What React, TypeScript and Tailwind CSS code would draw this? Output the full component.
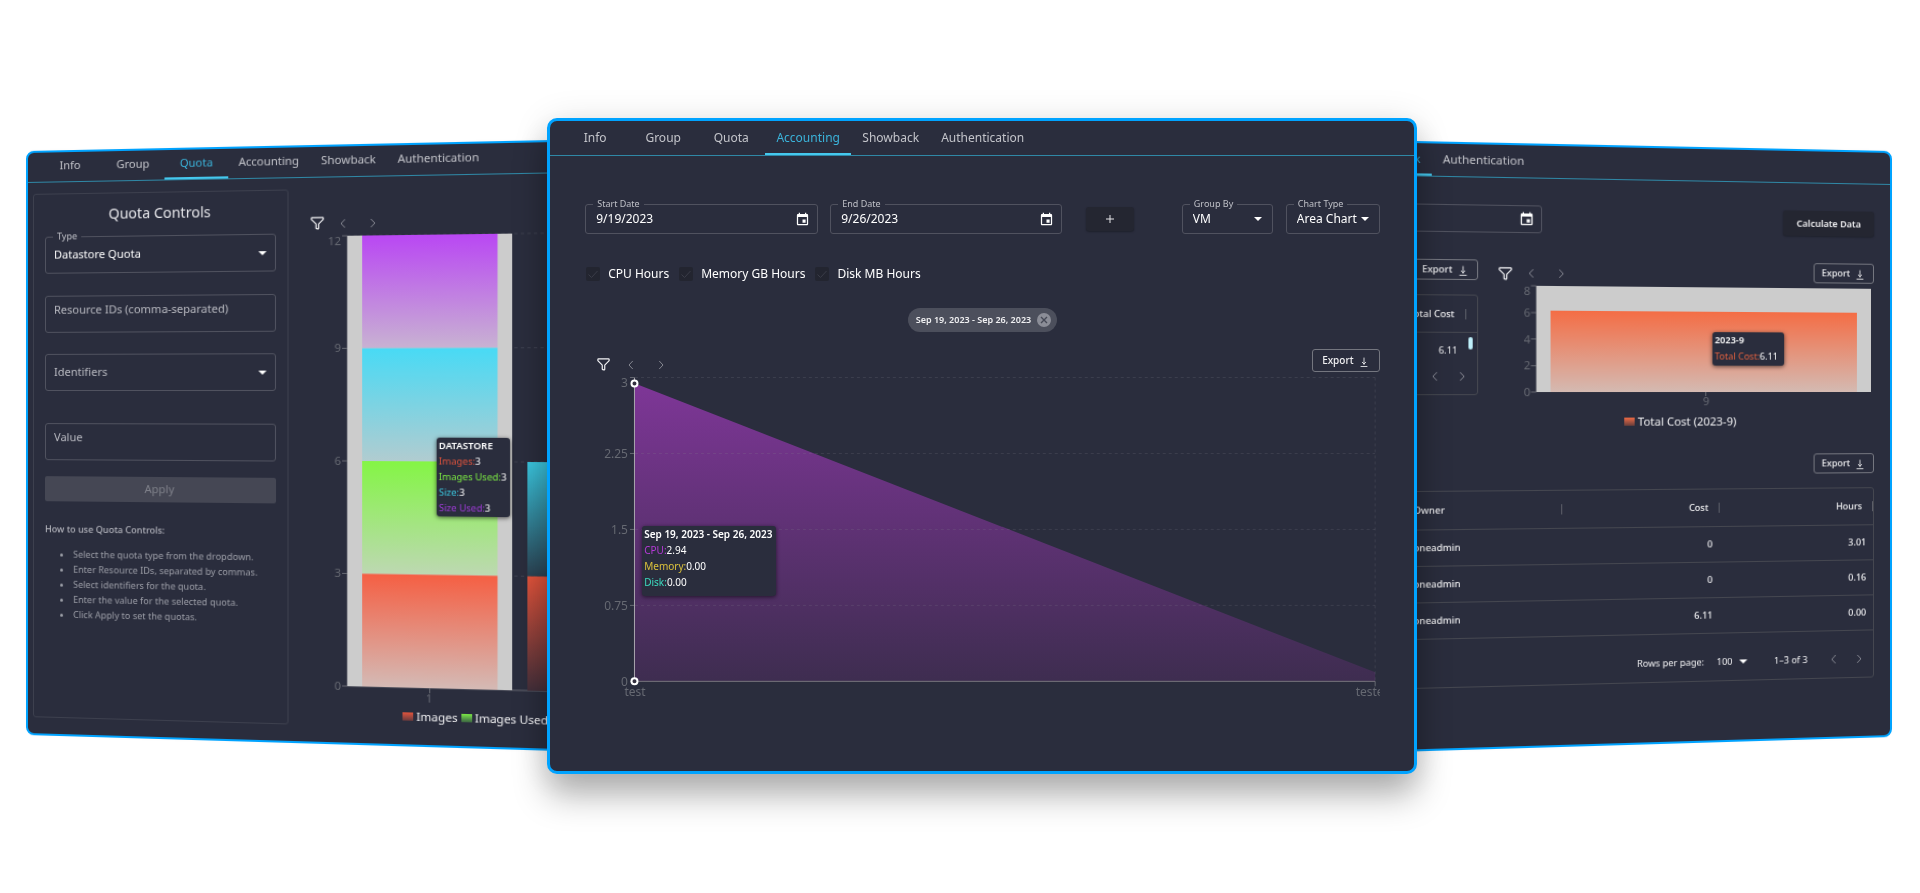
import React from "react";

/* ---------- icons ---------- */

const FilterIcon = () => (
  <svg viewBox="0 0 24 24" className="h-[15px] w-[15px] shrink-0" fill="none" stroke="#f4f4f6" strokeWidth="1.9">
    <path d="M4 3h16a1 1 0 0 1 1 1v1.59a1 1 0 0 1-.29.7l-6.42 6.42a1 1 0 0 0-.29.7v6.31a1 1 0 0 1-1.24.97l-2-.5a1 1 0 0 1-.76-.97v-5.81a1 1 0 0 0-.29-.7L3.29 6.29A1 1 0 0 1 3 5.59V4a1 1 0 0 1 1-1z" />
  </svg>
);

const Chevron = ({ dir }: { dir: "left" | "right" }) => (
  <svg viewBox="0 0 24 24" className="h-3 w-3" fill="none" stroke="#858791" strokeWidth="2" strokeLinecap="round" strokeLinejoin="round">
    <path d={dir === "left" ? "M15 4.500l-7 7.500 7 7.500" : "M9 4.500l7 7.500-7 7.500"} />
  </svg>
);

const CalendarIcon = () => (
  <svg viewBox="0 0 24 24" className="h-[15px] w-[15px] shrink-0" fill="#fff">
    <path d="M19 3h-1V1h-2v2H8V1H6v2H5c-1.11 0-1.99.9-1.99 2L3 19c0 1.1.89 2 2 2h14c1.1 0 2-.9 2-2V5c0-1.1-.9-2-2-2zm0 16H5V8h14v11zM17 12h-5v5h5z" />
  </svg>
);

const DownloadIcon = () => (
  <svg viewBox="0 0 24 24" className="h-3 w-3 shrink-0 translate-y-px" fill="none" stroke="currentColor" strokeWidth="1.700" strokeLinecap="round" strokeLinejoin="round">
    <path d="M6 21h12M12 4v12m0 0l3.500-3.500M12 16l-3.500-3.500" />
  </svg>
);

const Caret = () => (
  <svg viewBox="0 0 8 4" className="pointer-events-none h-1 w-2 shrink-0" fill="#fff">
    <path d="M0 0h8L4 4z" />
  </svg>
);

/* ---------- shared pieces ---------- */

type Tab = { label: string; width: string };

function Tabs({ tabs, active, bar, text }: { tabs: Tab[]; active: string; bar: string; text: string }) {
  return (
    <nav className={`flex border-b border-[#2f88a6] ${bar}`}>
      {tabs.map((t) => (
        <button
          key={t.label}
          type="button"
          className={`shrink-0 border-b-2 text-center ${text} ${t.width} ${
            t.label === active ? "border-[#45c8ee] text-[#3bb3da]" : "border-transparent text-[#c3c4ca]"
          }`}
        >
          {t.label}
        </button>
      ))}
    </nav>
  );
}

function Pager({ gap }: { gap: string }) {
  return (
    <div className={`flex items-center ${gap}`}>
      <button type="button" aria-label="Previous">
        <Chevron dir="left" />
      </button>
      <button type="button" aria-label="Next">
        <Chevron dir="right" />
      </button>
    </div>
  );
}

function ExportButton({ size }: { size: string }) {
  return (
    <button type="button" className={`flex shrink-0 items-center justify-center gap-1 rounded-[3px] border border-[#74767f] font-medium text-[#f0f0f2] ${size}`}>
      Export
      <DownloadIcon />
    </button>
  );
}

function FloatLabel({ htmlFor, children }: { htmlFor: string; children: React.ReactNode }) {
  return (
    <label htmlFor={htmlFor} className="absolute -top-[7px] left-[7px] bg-[#2a2d3d] px-1 text-[9px] leading-3 text-[#bfc0c7]">
      {children}
    </label>
  );
}

function DateField({ id, label, value, width }: { id: string; label: string; value: string; width: string }) {
  return (
    <div className={`relative flex h-[30px] items-center rounded-[3px] border border-[#50525f] pr-[7px] pl-[10px] ${width}`}>
      <FloatLabel htmlFor={id}>{label}</FloatLabel>
      <input id={id} defaultValue={value} className="min-w-0 flex-1 bg-transparent text-xs text-white outline-none" />
      <CalendarIcon />
    </div>
  );
}

function SelectField({ id, label, value, size, text }: { id: string; label?: string; value: string; size: string; text: string }) {
  return (
    <div className={`relative flex items-center rounded-[3px] border border-[#50525f] ${size}`}>
      {label && <FloatLabel htmlFor={id}>{label}</FloatLabel>}
      <select id={id} aria-label={label ?? value} className={`min-w-0 flex-1 appearance-none bg-transparent outline-none ${text}`}>
        <option>{value}</option>
      </select>
      <Caret />
    </div>
  );
}

function Tooltip({ title, rows, box }: { title: string; rows: { name: string; value: string; color: string }[]; box: string }) {
  return (
    <div className={`absolute rounded-[3px] bg-[#2a2d3d] px-[2px] text-white shadow-[0_1px_4px_rgba(0,0,0,0.6)] ${box}`}>
      <p className="font-semibold whitespace-nowrap">{title}</p>
      {rows.map((r) => (
        <p key={r.name} className="whitespace-nowrap">
          <span className={r.color}>{r.name}:</span>
          {r.value}
        </p>
      ))}
    </div>
  );
}

function Gradient({ id, from, to }: { id: string; from: string; to: string }) {
  return (
    <linearGradient id={id} x1="0" y1="0" x2="0" y2="1">
      <stop offset="0" stopColor={from} />
      <stop offset="1" stopColor={to} />
    </linearGradient>
  );
}

/* ---------- quota panel ---------- */

const quotaTabs: Tab[] = [
  { label: "Info", width: "w-[62px]" },
  { label: "Group", width: "w-[62px]" },
  { label: "Quota", width: "w-[62px]" },
  { label: "Accounting", width: "w-[78px]" },
  { label: "Showback", width: "w-[74px]" },
  { label: "Authentication", width: "w-[95px]" },
];

const quotaHelp = [
  "Select the quota type from the dropdown.",
  "Enter Resource IDs, separated by commas.",
  "Select identifiers for the quota.",
  "Enter the value for the selected quota.",
  "Click Apply to set the quotas.",
];

function QuotaChart() {
  return (
    <svg viewBox="0 0 245 460" className="h-[460px] w-[245px]" fontSize="11" fill="#666972">
      <defs>
        <Gradient id="q-purple" from="#b947f3" to="#c8b2d2" />
        <Gradient id="q-cyan" from="#48daf5" to="#b1ccd0" />
        <Gradient id="q-green" from="#84f545" to="#bdd8b2" />
        <Gradient id="q-red" from="#f55f43" to="#d4bab5" />
        <Gradient id="q-cyan2" from="#3ac6df" to="#2b4252" />
        <Gradient id="q-red2" from="#e2533b" to="#432f3a" />
      </defs>
      <g stroke="#3d404f" strokeDasharray="3 3">
        <path d="M36 5H245M36 114.500H245M36 224H245M36 333.500H245" />
      </g>
      <path d="M36 5V443H245M31 5h5M31 114.500h5M31 224h5M31 333.500h5M31 443h5M113.500 443v5" stroke="#666972" fill="none" />
      <rect x="36" y="5" width="154" height="438" fill="#ccc" />
      <rect x="50" y="5" width="126.500" height="109.500" fill="url(#q-purple)" />
      <rect x="50" y="114.500" width="126.500" height="109.500" fill="url(#q-cyan)" />
      <rect x="50" y="224" width="126.500" height="109.500" fill="url(#q-green)" />
      <rect x="50" y="333.500" width="126.500" height="109.500" fill="url(#q-red)" />
      <rect x="204" y="224" width="41" height="109.500" fill="url(#q-cyan2)" />
      <rect x="204" y="333.500" width="41" height="109.500" fill="url(#q-red2)" />
      <g textAnchor="end">
        <text x="30" y="14">12</text>
        <text x="30" y="118">9</text>
        <text x="30" y="228">6</text>
        <text x="30" y="337">3</text>
        <text x="30" y="447">0</text>
      </g>
      <text x="113" y="457" textAnchor="middle">1</text>
    </svg>
  );
}

function QuotaPanel() {
  return (
    <section className="mt-[33px] min-w-0 flex-[521] origin-[0%_41%] [transform:perspective(600px)_rotateY(-3deg)] overflow-hidden rounded-lg border-2 border-[#00a3ff] bg-[#2a2d3d] shadow-[0_0_4px_rgba(0,0,0,0.02)]">
      <Tabs tabs={quotaTabs} active="Quota" bar="h-[30px] pl-[11px]" text="text-[11px]" />
      <div className="flex">
        <div className="mt-[11px] mb-4 ml-[5px] h-[523px] w-[250px] shrink-0 rounded-[3px] border border-[#3d404e] px-[11px]">
          <h2 className="mt-[10px] text-center text-sm leading-5 text-[#e6e6ea]">Quota Controls</h2>
          <form onSubmit={(e) => e.preventDefault()}>
            <div className="mt-3">
              <SelectField id="quota-type" label="Type" value="Datastore Quota" size="h-[37px] pl-2 pr-2" text="text-[11px] text-white" />
            </div>
            <input
              aria-label="Resource IDs"
              placeholder="Resource IDs (comma-separated)"
              className="mt-[22px] block h-[37px] w-full rounded-[3px] border border-[#50525f] bg-transparent pb-[10px] pl-2 text-[11px] placeholder:text-[#b9bac1]"
            />
            <div className="mt-[21px]">
              <SelectField id="quota-ids" value="Identifiers" size="h-[37px] pl-2 pr-2" text="text-[11px] text-[#b9bac1]" />
            </div>
            <input
              aria-label="Value"
              placeholder="Value"
              className="mt-8 block h-[37px] w-full rounded-[3px] border border-[#50525f] bg-transparent pb-[10px] pl-2 text-[11px] placeholder:text-[#b9bac1]"
            />
            <button type="submit" disabled className="mt-4 block h-[25px] w-full rounded-[2px] bg-[#454754] text-[11px] text-[#7f818a]">
              Apply
            </button>
          </form>
          <h3 className="mt-[21px] text-[9px] leading-[14px] font-medium text-[#b3b4bc]">How to use Quota Controls:</h3>
          <ul className="mt-[10px] list-disc pl-7 text-[9px] leading-[15px] text-[#9c9ea7]">
            {quotaHelp.map((t) => (
              <li key={t} className="whitespace-nowrap">{t}</li>
            ))}
          </ul>
        </div>
        <div className="ml-5 shrink-0 pt-[37px]">
          <div className="flex h-[15px] items-center gap-[11px]">
            <button type="button" aria-label="Filter">
              <FilterIcon />
            </button>
            <Pager gap="gap-4" />
          </div>
          <div className="relative">
            <QuotaChart />
            <Tooltip
              title="DATASTORE"
              box="top-[201px] left-[120px] h-[76px] w-[68px] text-[9px] leading-[15px]"
              rows={[
                { name: "Images", value: "3", color: "text-[#e0533c]" },
                { name: "Images Used", value: "3", color: "text-[#7be843]" },
                { name: "Size", value: "3", color: "text-[#3ac6df]" },
                { name: "Size Used", value: "3", color: "text-[#9e3bd6]" },
              ]}
            />
          </div>
          <div className="mt-1 flex items-center gap-1 pl-[88px] text-[11px] leading-[14px] text-[#f0f0f2]">
            <span className="flex items-center gap-[3px]">
              <i className="h-2 w-[10px] bg-linear-to-b from-[#e2533b] to-[#6a3a3c]" />
              Images
            </span>
            <span className="flex items-center gap-[2px]">
              <i className="h-2 w-[10px] bg-linear-to-b from-[#7be843] to-[#3c6640]" />
              Images Used
            </span>
          </div>
        </div>
      </div>
    </section>
  );
}

/* ---------- accounting panel ---------- */

const accountingTabs: Tab[] = [
  { label: "Info", width: "w-[68px]" },
  { label: "Group", width: "w-[68px]" },
  { label: "Quota", width: "w-[68px]" },
  { label: "Accounting", width: "w-[86px]" },
  { label: "Showback", width: "w-[79px]" },
  { label: "Authentication", width: "w-[105px]" },
];

function HoursCheck({ label }: { label: string }) {
  return (
    <label className="flex items-center gap-2">
      <span className="grid h-[14px] w-[14px] place-items-center">
        <input type="checkbox" defaultChecked className="col-start-1 row-start-1 h-[14px] w-[14px] appearance-none rounded-[2px] bg-[#232530]" />
        <svg viewBox="0 0 14 14" className="pointer-events-none col-start-1 row-start-1 h-[14px] w-[14px]" fill="none" stroke="#3a3c48">
          <path d="M2.500 7.500l3 3 6-6.500" />
        </svg>
      </span>
      {label}
    </label>
  );
}

function AccountingChart() {
  return (
    <svg viewBox="0 0 795 330" className="block h-auto w-full" fontSize="12" fill="#666972">
      <defs>
        <Gradient id="a-purple" from="#7e3697" to="#3e2d50" />
      </defs>
      <path d="M50 11.500L790.500 300.500V309.500H50z" fill="url(#a-purple)" />
      <path d="M50 5.500H790.500M50 81.500H790.500M50 157.500H790.500M50 233.500H790.500M790.500 5.500V309" stroke="#8a8c96" strokeOpacity="0.2" strokeDasharray="3 3" fill="none" />
      <path d="M45 5.500h5M45 81.500h5M45 157.500h5M45 233.500h5M45 309.500h5M790.500 309.500v5" stroke="#666972" />
      <path d="M50 309.500H790.500" stroke="#77747c" />
      <path d="M49.500 6V309" stroke="#aaa6ae" />
      <g textAnchor="end">
        <text x="43" y="15">3</text>
        <text x="43" y="86">2.25</text>
        <text x="43" y="162">1.5</text>
        <text x="43" y="238">0.75</text>
        <text x="43" y="314">0</text>
      </g>
      <text x="50" y="324" textAnchor="middle">test</text>
      <text x="771" y="324">teste</text>
      <g fill="#33303f" stroke="#fff" strokeWidth="2">
        <circle cx="49.500" cy="11.500" r="3" />
        <circle cx="49.500" cy="309.500" r="3" />
      </g>
    </svg>
  );
}

function AccountingPanel() {
  return (
    <section className="relative z-10 min-w-0 flex-[870] overflow-hidden rounded-[10px] border-3 border-[#00a3ff] bg-[#2a2d3d] shadow-[0_22px_34px_rgba(0,0,0,0.28),0_4px_36px_rgba(0,0,0,0.12)]">
      <Tabs tabs={accountingTabs} active="Accounting" bar="h-[35px] pl-[11px]" text="pt-[2px] text-xs" />
      <div className="pt-12 pr-[34px] pb-[69px] pl-[35px] text-xs text-white">
        <div className="flex items-center">
          <DateField id="start" label="Start Date" value="9/19/2023" width="w-[233px]" />
          <div className="w-3" />
          <DateField id="end" label="End Date" value="9/26/2023" width="w-[232px]" />
          <button type="button" aria-label="Add range" className="ml-6 flex h-6 w-12 items-center justify-center rounded-[3px] bg-[#242631] shadow-[0_1px_2px_rgba(0,0,0,0.3)]">
            <svg viewBox="0 0 10 10" className="h-[10px] w-[10px]" stroke="#e6e6ea">
              <path d="M5 1v8M1 5h8" />
            </svg>
          </button>
          <div className="ml-auto flex gap-[13px]">
            <SelectField id="group" label="Group By" value="VM" size="h-[30px] w-[91px] pl-[10px] pr-[10px]" text="text-xs text-white" />
            <SelectField id="chart" label="Chart Type" value="Area Chart" size="h-[30px] w-[94px] pl-[10px] pr-[10px]" text="text-xs text-white" />
          </div>
        </div>
        <div className="mt-8 flex gap-[10px] pl-px text-xs leading-4">
          <HoursCheck label="CPU Hours" />
          <HoursCheck label="Memory GB Hours" />
          <HoursCheck label="Disk MB Hours" />
        </div>
        <div className="mt-[26px] flex justify-center">
          <span className="flex h-6 items-center gap-[6px] rounded-full bg-[#4c4f5c] px-2 pr-[6px] text-[9px] font-semibold text-[#f0f0f2]">
            Sep 19, 2023 - Sep 26, 2023
            <button type="button" aria-label="Remove range">
              <svg viewBox="0 0 14 14" className="h-[14px] w-[14px]">
                <circle cx="7" cy="7" r="7" fill="#8b8d97" />
                <path d="M4 4l6 6M10 4l-6 6" stroke="#464956" strokeWidth="1.400" />
              </svg>
            </button>
          </span>
        </div>
        <div className="mt-[17px] flex h-[23px] items-center pl-[11px]">
          <button type="button" aria-label="Filter" className="mt-2">
            <FilterIcon />
          </button>
          <div className="mt-2 ml-[14px]">
            <Pager gap="gap-[18px]" />
          </div>
          <div className="ml-auto">
            <ExportButton size="h-[23px] w-[68px] text-[10px]" />
          </div>
        </div>
        <div className="relative">
          <AccountingChart />
          <Tooltip
            title="Sep 19, 2023 - Sep 26, 2023"
            box="top-[154px] left-[57px] h-[70px] w-[134px] text-[10px] leading-4"
            rows={[
              { name: "CPU", value: "2.94", color: "text-[#b53ad6]" },
              { name: "Memory", value: "0.00", color: "text-[#dcc23c]" },
              { name: "Disk", value: "0.00", color: "text-[#3cdcc0]" },
            ]}
          />
        </div>
      </div>
    </section>
  );
}

/* ---------- showback panel ---------- */

const showbackTabs: Tab[] = [
  { label: "Showback", width: "w-[73px]" },
  { label: "Authentication", width: "w-[96px]" },
];

const records = [
  { owner: "oneadmin", cost: "0", hours: "3.01" },
  { owner: "oneadmin", cost: "0", hours: "0.16" },
  { owner: "oneadmin", cost: "6.11", hours: "0.00" },
];

function ShowbackChart() {
  return (
    <svg viewBox="0 0 348 124" className="ml-auto block h-[124px] w-[348px]" fontSize="11" fill="#666972">
      <defs>
        <Gradient id="s-orange" from="#f46d45" to="#d4bab2" />
      </defs>
      <path d="M15.500 5h5M15.500 31h5M15.500 56.500h5M15.500 82.500h5M15.500 108h5M182.500 108v4" stroke="#666972" />
      <rect x="20.500" y="5" width="324.500" height="103" fill="#ccc" />
      <rect x="34" y="29" width="297" height="79" fill="url(#s-orange)" />
      <g textAnchor="end">
        <text x="15" y="14">8</text>
        <text x="15" y="35">6</text>
        <text x="15" y="61">4</text>
        <text x="15" y="86">2</text>
        <text x="15" y="112">0</text>
      </g>
      <text x="183" y="121" textAnchor="middle">9</text>
    </svg>
  );
}

function Separator() {
  return <i className="h-[10px] w-px bg-[#5c5e68]" />;
}

function ShowbackPanel() {
  return (
    <section className="mt-[33px] -ml-[46px] min-w-0 flex-[521] origin-[100%_41%] [transform:perspective(600px)_rotateY(3deg)] overflow-hidden rounded-lg border-2 border-[#00a3ff] bg-[#2a2d3d] shadow-[0_0_4px_rgba(0,0,0,0.02)]">
      <Tabs tabs={showbackTabs} active="Showback" bar="h-8 justify-end pr-[345px]" text="pt-px text-[11px]" />
      <div className="pt-[26px] pr-4 pb-[58px] pl-4 text-[9px] text-[#f0f0f2]">
        <div className="flex items-center justify-between">
          <div className="flex h-[27px] w-[163px] items-center rounded-[3px] border border-[#50525f] pr-[6px] pl-2">
            <input aria-label="End date" className="min-w-0 flex-1 bg-transparent text-[11px] outline-none" />
            <CalendarIcon />
          </div>
          <button type="button" className="h-[25px] w-[90px] rounded-[3px] bg-[#242631] text-[9px] font-semibold shadow-[0_1px_2px_rgba(0,0,0,0.3)]">
            Calculate Data
          </button>
        </div>
        <div className="mt-[26px] flex justify-between">
          <div className="w-[103px]">
            <div className="flex justify-end">
              <ExportButton size="h-5 w-[60px] text-[9px]" />
            </div>
            <div className="mt-[14px] h-[97px] rounded-[3px] border border-[#454750]">
              <div className="flex h-9 items-center justify-end gap-[10px] border-b border-[#454750] pr-[10px] font-medium">
                <span className="whitespace-nowrap">Total Cost</span>
                <Separator />
              </div>
              <div className="flex h-7 items-start justify-end gap-[10px] pt-1 pr-1">
                <span className="pt-1 leading-[18px]">6.11</span>
                <i className="h-3 w-1 rounded-full bg-[#bff0fb]" />
              </div>
              <div className="flex justify-end pt-2 pr-2">
                <Pager gap="gap-[13px]" />
              </div>
            </div>
          </div>
          <div className="w-[368px]">
            <div className="flex h-5 justify-between">
              <div className="flex items-center gap-[11px] pt-[6px] pl-1">
                <button type="button" aria-label="Filter">
                  <FilterIcon />
                </button>
                <Pager gap="gap-4" />
              </div>
              <ExportButton size="h-5 w-[60px] text-[9px]" />
            </div>
            <div className="relative">
              <ShowbackChart />
              <Tooltip
                title="2023-9"
                box="top-[49px] right-[89px] h-[33px] w-[70px] text-[9px] leading-4"
                rows={[{ name: "Total Cost", value: "6.11", color: "text-[#e0603f]" }]}
              />
            </div>
            <div className="mt-[6px] flex items-center justify-center gap-[3px] pr-3 text-[11px] leading-[14px]">
              <i className="h-2 w-[10px] bg-linear-to-b from-[#f06a43] to-[#6a3e3a]" />
              Total Cost (2023-9)
            </div>
          </div>
        </div>
        <div className="mt-[25px] flex justify-end">
          <ExportButton size="h-5 w-[60px] text-[9px]" />
        </div>
        <div className="mt-[14px] rounded-[3px] border border-[#454750]">
          <table className="w-full table-fixed">
            <thead>
              <tr className="h-9 border-b border-[#454750]">
                <th className="p-0 pl-[42px] text-left font-medium">
                  <span className="flex items-center justify-between">
                    Owner
                    <Separator />
                  </span>
                </th>
                <th className="w-[151px] p-0 font-medium">
                  <span className="flex items-center justify-end gap-[10px]">
                    Cost
                    <Separator />
                  </span>
                </th>
                <th className="w-[151px] p-0 font-medium">
                  <span className="flex items-center justify-end gap-[10px]">
                    Hours
                    <Separator />
                  </span>
                </th>
              </tr>
            </thead>
            <tbody className="font-medium">
              {records.map((r) => (
                <tr key={r.hours} className="h-[35px] border-b border-[#454750]">
                  <td className="p-0 pl-[42px]">{r.owner}</td>
                  <td className="p-0 pr-[7px] text-right">{r.cost}</td>
                  <td className="p-0 pr-[7px] text-right">{r.hours}</td>
                </tr>
              ))}
            </tbody>
          </table>
          <div className="flex h-[46px] items-center justify-end pt-[10px] pr-2">
            <label htmlFor="rows">Rows per page:</label>
            <select id="rows" className="ml-3 w-[18px] appearance-none bg-transparent outline-none">
              <option>100</option>
            </select>
            <span className="ml-1">
              <Caret />
            </span>
            <span className="mr-5 ml-[26px]">1–3 of 3</span>
            <Pager gap="gap-[13px]" />
          </div>
        </div>
      </div>
    </section>
  );
}

export default function App() {
  return (
    <main className="flex min-h-screen items-start overflow-hidden bg-white pt-[118px] pr-[28px] pl-[26px] font-['Noto_Sans',sans-serif]">
      <QuotaPanel />
      <AccountingPanel />
      <ShowbackPanel />
    </main>
  );
}
